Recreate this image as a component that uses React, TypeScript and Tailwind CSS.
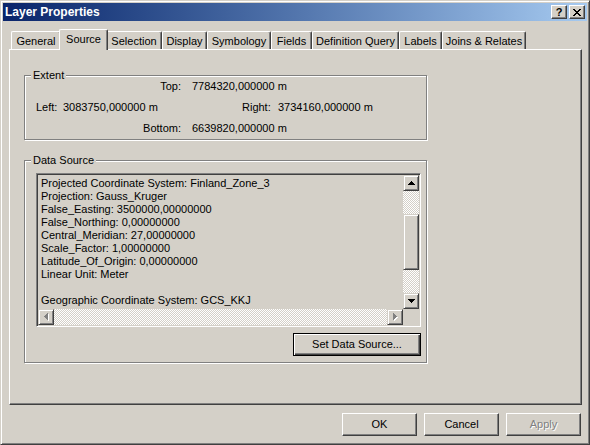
import React from "react";

const raised =
  "border border-t-white border-l-white border-r-[#404040] border-b-[#404040] shadow-[inset_-1px_-1px_#808080]";
const scrollBtn =
  "border border-t-[#d4d0c8] border-l-[#d4d0c8] border-r-[#404040] border-b-[#404040] shadow-[inset_1px_1px_#fff,inset_-1px_-1px_#808080] bg-[#d4d0c8]";
const dither =
  "bg-[conic-gradient(#ffffff_25%,#d4d0c8_0_50%,#ffffff_0_75%,#d4d0c8_0)] bg-[length:2px_2px]";

function UpArrow() {
  return (
    <svg width="7" height="4" viewBox="0 0 7 4" shapeRendering="crispEdges">
      <rect x="3" y="0" width="1" height="1" fill="#000" />
      <rect x="2" y="1" width="3" height="1" fill="#000" />
      <rect x="1" y="2" width="5" height="1" fill="#000" />
      <rect x="0" y="3" width="7" height="1" fill="#000" />
    </svg>
  );
}

function DownArrow() {
  return (
    <svg width="7" height="4" viewBox="0 0 7 4" shapeRendering="crispEdges">
      <rect x="0" y="0" width="7" height="1" fill="#000" />
      <rect x="1" y="1" width="5" height="1" fill="#000" />
      <rect x="2" y="2" width="3" height="1" fill="#000" />
      <rect x="3" y="3" width="1" height="1" fill="#000" />
    </svg>
  );
}

function HArrow({ dir }: { dir: "left" | "right" }) {
  const cols =
    dir === "left"
      ? [
          [0, 3, 1],
          [1, 2, 3],
          [2, 1, 5],
          [3, 0, 7],
        ]
      : [
          [0, 0, 7],
          [1, 1, 5],
          [2, 2, 3],
          [3, 3, 1],
        ];
  return (
    <svg width="5" height="8" viewBox="0 0 5 8" shapeRendering="crispEdges">
      {cols.map(([x, y, h], i) => (
        <rect key={"w" + i} x={x + 1} y={y + 1} width="1" height={h} fill="#fff" />
      ))}
      {cols.map(([x, y, h], i) => (
        <rect key={"g" + i} x={x} y={y} width="1" height={h} fill="#808080" />
      ))}
    </svg>
  );
}

function CloseGlyph() {
  const rows: [number, number][][] = [
    [[0, 2], [6, 2]],
    [[1, 2], [5, 2]],
    [[2, 4]],
    [[3, 2]],
    [[2, 4]],
    [[1, 2], [5, 2]],
    [[0, 2], [6, 2]],
  ];
  return (
    <svg width="8" height="7" viewBox="0 0 8 7" shapeRendering="crispEdges">
      {rows.map((r, y) =>
        r.map(([x, w], i) => <rect key={y + "-" + i} x={x} y={y} width={w} height="1" fill="#000" />)
      )}
    </svg>
  );
}

const tabs: { label: string; w: string; selected?: boolean }[] = [
  { label: "General", w: "w-[50px]" },
  { label: "Source", w: "w-[49px]", selected: true },
  { label: "Selection", w: "w-[56px]" },
  { label: "Display", w: "w-[45px]" },
  { label: "Symbology", w: "w-[64px]" },
  { label: "Fields", w: "w-[41px]" },
  { label: "Definition Query", w: "w-[87px]" },
  { label: "Labels", w: "w-[43px]" },
  { label: "Joins & Relates", w: "w-[84px]" },
];

const lines = [
  "Projected Coordinate System: Finland_Zone_3",
  "Projection: Gauss_Kruger",
  "False_Easting: 3500000,00000000",
  "False_Northing: 0,00000000",
  "Central_Meridian: 27,00000000",
  "Scale_Factor: 1,00000000",
  "Latitude_Of_Origin: 0,00000000",
  "Linear Unit: Meter",
  "",
  "Geographic Coordinate System: GCS_KKJ",
];

export default function App() {
  return (
    <div className="w-[590px] h-[445px] bg-[#d4d0c8] border border-t-[#d4d0c8] border-l-[#d4d0c8] border-r-[#404040] border-b-[#404040] shadow-[inset_1px_1px_#fff,inset_-1px_-1px_#808080] p-[2px] flex flex-col font-['Tahoma','Liberation_Sans',sans-serif] text-[11px] leading-[13px] text-black overflow-hidden select-none">
      <div className="h-[18px] shrink-0 flex items-center bg-gradient-to-r from-[#0a246a] to-[#a6caf0] pl-[2px] pr-[2px]">
        <span className="flex-1 font-bold text-white text-[12px] leading-[14px]">Layer Properties</span>
        <div className="flex gap-[2px]">
          <div className={`w-[16px] h-[14px] flex items-center justify-center bg-[#d4d0c8] ${raised}`}>
            <span className="font-bold text-[11px] leading-[11px] pt-[1px]">?</span>
          </div>
          <div className={`w-[16px] h-[14px] flex items-center justify-center bg-[#d4d0c8] ${raised}`}>
            <CloseGlyph />
          </div>
        </div>
      </div>

      <div className="flex flex-col pl-[6px] pr-[5px] pt-[8px]">
        <div className="h-[20px] flex items-end pl-[2px]">
          {tabs.map((t) =>
            t.selected ? (
              <div
                key={t.label}
                className={`${t.w} -mx-[2px] h-[21px] -mb-[1px] relative z-10 bg-[#d4d0c8] border-t border-l border-r border-t-white border-l-white border-r-[#404040] shadow-[inset_-1px_0_#808080] rounded-t-[2px] flex justify-center pt-[3px]`}
              >
                {t.label}
              </div>
            ) : (
              <div
                key={t.label}
                className={`${t.w} h-[18px] bg-[#d4d0c8] border-t border-l border-r border-t-white border-l-white border-r-[#404040] shadow-[inset_-1px_0_#808080] rounded-t-[2px] flex justify-center pt-[3px]`}
              >
                {t.label}
              </div>
            )
          )}
        </div>

        <div className={`h-[356px] ${raised} flex flex-col pl-[14px] pt-[25px]`}>
          <div className="relative w-[403px] h-[65px] border border-[#808080] shadow-[inset_1px_1px_#fff,1px_1px_#fff] flex flex-col gap-[8px] pt-[4px]">
            <span className="absolute left-[6px] top-[-7px] px-[2px] bg-[#d4d0c8]">Extent</span>
            <div className="flex whitespace-nowrap">
              <span className="w-[156px] text-right">Top:</span>
              <span className="ml-[11px]">7784320,000000 m</span>
            </div>
            <div className="flex whitespace-nowrap pl-[11px]">
              <span className="w-[27px]">Left:</span>
              <span className="w-[179px]">3083750,000000 m</span>
              <span className="w-[36px]">Right:</span>
              <span>3734160,000000 m</span>
            </div>
            <div className="flex whitespace-nowrap">
              <span className="w-[156px] text-right">Bottom:</span>
              <span className="ml-[11px]">6639820,000000 m</span>
            </div>
          </div>

          <div className="relative mt-[20px] w-[403px] h-[203px] border border-[#808080] shadow-[inset_1px_1px_#fff,1px_1px_#fff] pl-[11px] pt-[12px]">
            <span className="absolute left-[6px] top-[-7px] px-[2px] bg-[#d4d0c8]">Data Source</span>
            <div className="w-[385px] flex flex-col items-end">
              <div className="w-[385px] h-[154px] border border-t-[#808080] border-l-[#808080] border-b-white border-r-white shadow-[inset_1px_1px_#404040,inset_-1px_-1px_#d4d0c8] p-[1px] flex flex-col">
                <div className="h-[134px] flex">
                  <div className="flex-1 overflow-hidden pt-[2px] pl-[3px] whitespace-nowrap">
                    {lines.map((l, i) => (
                      <div key={i} className="h-[13px]">
                        {l}
                      </div>
                    ))}
                  </div>
                  <div className="w-[16px] flex flex-col">
                    <div className={`h-[16px] flex items-center justify-center ${scrollBtn}`}>
                      <UpArrow />
                    </div>
                    <div className={`h-[23px] ${dither}`} />
                    <div className={`h-[56px] ${scrollBtn}`} />
                    <div className={`flex-1 ${dither}`} />
                    <div className={`h-[16px] flex items-center justify-center ${scrollBtn}`}>
                      <DownArrow />
                    </div>
                  </div>
                </div>
                <div className="h-[16px] flex">
                  <div className={`w-[16px] flex items-center justify-center ${scrollBtn}`}>
                    <HArrow dir="left" />
                  </div>
                  <div className={`flex-1 ${dither}`} />
                  <div className={`w-[16px] flex items-center justify-center ${scrollBtn}`}>
                    <HArrow dir="right" />
                  </div>
                  <div className="w-[16px] bg-[#d4d0c8]" />
                </div>
              </div>
              <div className="mt-[6px] w-[128px] h-[23px] border border-black shadow-[inset_1px_1px_#fff,inset_-1px_-1px_#404040,inset_-2px_-2px_#808080] flex items-center justify-center">
                Set Data Source...
              </div>
            </div>
          </div>
        </div>

        <div className="mt-[8px] flex justify-end gap-[7px] pr-[1px]">
          <div className={`w-[75px] h-[23px] ${raised} flex items-center justify-center`}>OK</div>
          <div className={`w-[75px] h-[23px] ${raised} flex items-center justify-center`}>Cancel</div>
          <div
            className={`w-[75px] h-[23px] ${raised} flex items-center justify-center text-[#808080] [text-shadow:1px_1px_#fff]`}
          >
            Apply
          </div>
        </div>
      </div>
    </div>
  );
}
